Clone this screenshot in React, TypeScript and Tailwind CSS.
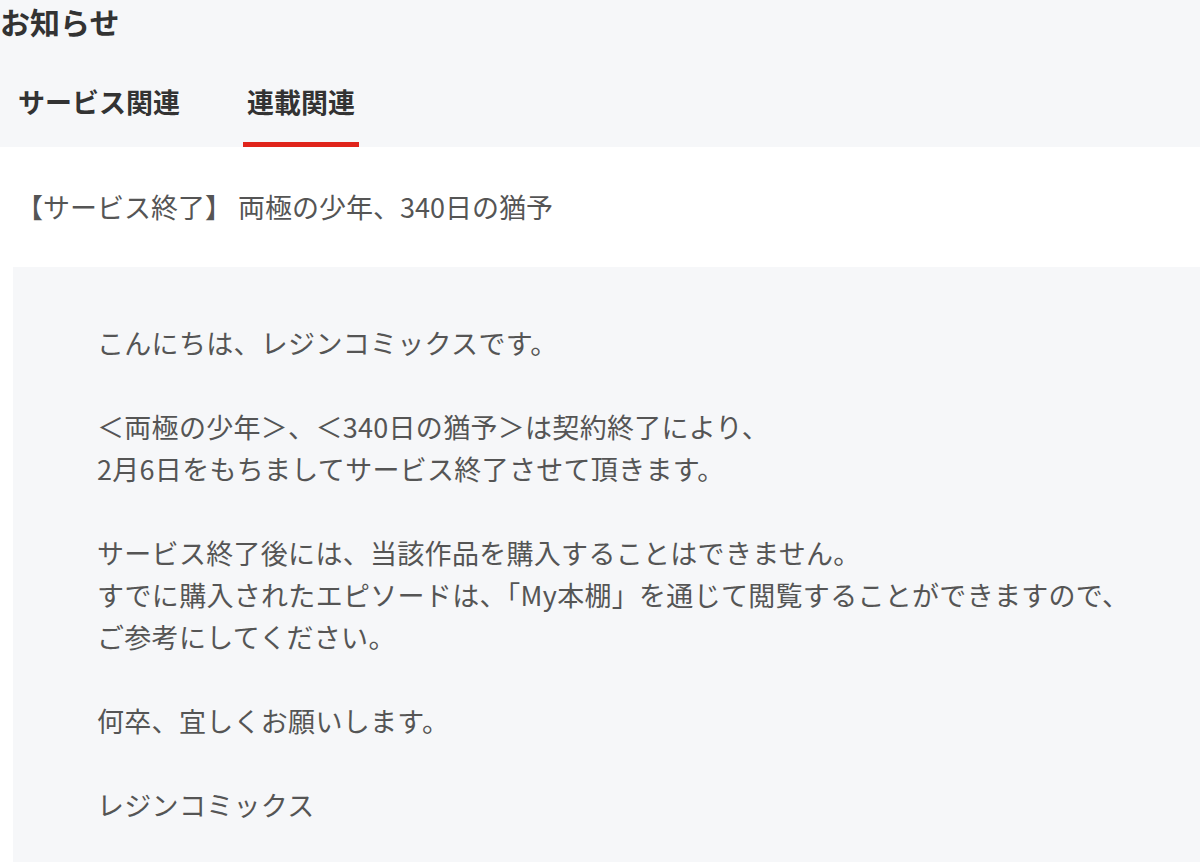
import React from "react";

const font = { fontFamily: '"Noto Sans CJK JP", "Noto Sans", sans-serif' };

export default function App() {
  const lines: (string | null)[] = [
    "こんにちは、レジンコミックスです。",
    null,
    "＜両極の少年＞、＜340日の猶予＞は契約終了により、",
    "2月6日をもちましてサービス終了させて頂きます。",
    null,
    "サービス終了後には、当該作品を購入することはできません。",
    "すでに購入されたエピソードは、「My本棚」を通じて閲覧することができますので、",
    "ご参考にしてください。",
    null,
    "何卒、宜しくお願いします。",
    null,
    "レジンコミックス",
  ];
  return (
    <div className="min-h-screen bg-white" style={font}>
      <div className="bg-[#f6f7f9]">
        <h1 className="text-[30px] font-bold leading-[42px] text-[#333]">お知らせ</h1>
        <div className="flex pt-[41px]">
          <div className="ml-[18px] pb-[21px] border-b-[5px] border-transparent text-[27px] font-bold leading-[38px] text-[#333]">
            サービス関連
          </div>
          <div className="ml-[63px] px-[4px] pb-[21px] border-b-[5px] border-[#e0241b] text-[27px] font-bold leading-[38px] text-[#333]">
            連載関連
          </div>
        </div>
      </div>
      <div className="h-[120px] px-[16px] flex items-center text-[27px] text-[#555]">
        【サービス終了】 両極の少年、340日の猶予
      </div>
      <div className="ml-[13px] bg-[#f6f7f9] pl-[84px] pt-[55px] pb-[40px] text-[27px] leading-[42px] text-[#555] tracking-[0.3px]">
        {lines.map((l, i) =>
          l === null ? <div key={i} className="h-[42px]" /> : <div key={i}>{l}</div>
        )}
      </div>
    </div>
  );
}
